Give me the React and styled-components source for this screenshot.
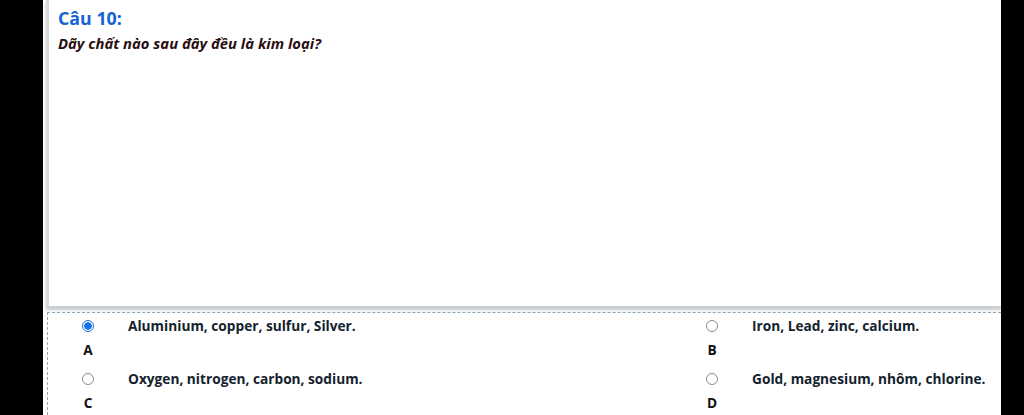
import React, { useState } from "react";
import styled, { createGlobalStyle } from "styled-components";

const GlobalStyle = createGlobalStyle`
  html, body {
    margin: 0;
    padding: 0;
    background: #000;
    height: 100%;
    overflow: hidden;
  }
  #root {
    height: 100%;
  }
`;

const Page = styled.div`
  margin-left: 43px;
  width: 958px;
  height: 415px;
  background: #fff;
  font-family: "Open Sans", "Noto Sans", sans-serif;
  overflow: hidden;
`;

const QuestionPanel = styled.div`
  margin-left: 3px;
  height: 300px;
  border-left: 3px solid #d6dbe0;
  border-bottom: 2px solid #c9d0d6;
  box-shadow: 0 2px 3px rgba(120, 130, 140, 0.45);
  padding: 6px 0 0 9px;
  box-sizing: content-box;
`;

const Title = styled.div`
  color: #1463d2;
  font-size: 17.8px;
  font-weight: 700;
  line-height: 24px;
`;

const Question = styled.div`
  margin-top: 2px;
  color: #2a0f12;
  font-size: 14.8px;
  font-weight: 700;
  font-style: italic;
  line-height: 22px;
`;

const Answers = styled.div`
  margin: 4px 0 0 4px;
  border-top: 1px dashed #8fa6b8;
  border-left: 1px dashed #8fa6b8;
  display: grid;
  grid-template-columns: 624px 1fr;
  padding-top: 1px;
`;

const Option = styled.label`
  display: grid;
  grid-template-columns: 80px 1fr;
  grid-template-rows: 24px 29px;
  cursor: pointer;
`;

const RadioCell = styled.div`
  display: flex;
  align-items: center;
  justify-content: center;
`;

const Radio = styled.span`
  width: 12px;
  height: 12px;
  border-radius: 50%;
  box-sizing: border-box;
  border: 1px solid ${(p) => (p.checked ? "#1a73e8" : "#8d8d8d")};
  background: ${(p) =>
    p.checked ? "radial-gradient(circle, #1a73e8 0 3.5px, #fff 4px)" : "#fff"};
`;

const OptionText = styled.div`
  color: #14222e;
  font-size: 13.7px;
  font-weight: 700;
  line-height: 24px;
  white-space: nowrap;
`;

const Letter = styled.div`
  color: #111;
  font-size: 13.7px;
  font-weight: 700;
  text-align: center;
  line-height: 20px;
  padding-top: 2px;
`;

const options = [
  { key: "A", text: "Aluminium, copper, sulfur, Silver." },
  { key: "B", text: "Iron, Lead, zinc, calcium." },
  { key: "C", text: "Oxygen, nitrogen, carbon, sodium." },
  { key: "D", text: "Gold, magnesium, nhôm, chlorine." },
];

export default function App() {
  const [selected, setSelected] = useState("A");

  return (
    <>
      <GlobalStyle />
      <Page>
        <QuestionPanel>
          <Title>Câu 10:</Title>
          <Question>Dãy chất nào sau đây đều là kim loại?</Question>
        </QuestionPanel>
        <Answers>
          {options.map((o) => (
            <Option key={o.key} onClick={() => setSelected(o.key)}>
              <RadioCell>
                <Radio checked={selected === o.key} />
              </RadioCell>
              <OptionText>{o.text}</OptionText>
              <Letter>{o.key}</Letter>
            </Option>
          ))}
        </Answers>
      </Page>
    </>
  );
}
